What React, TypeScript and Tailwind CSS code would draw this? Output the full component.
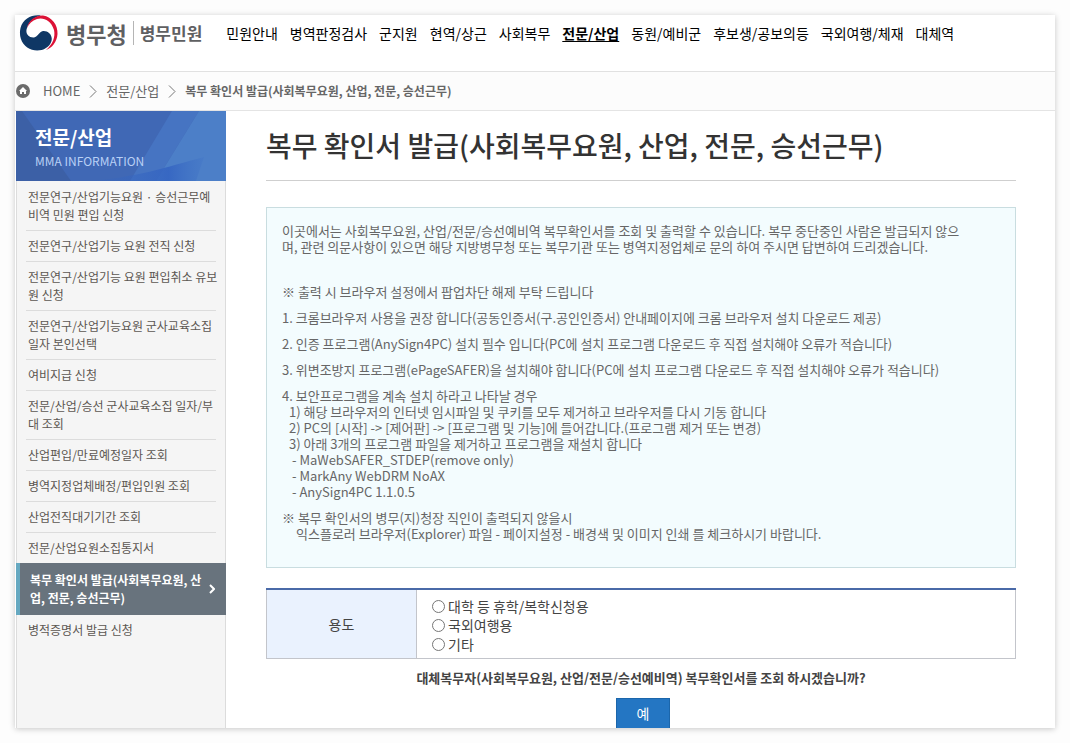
import React from 'react';

interface SideItem {
  lines: string[];
  active?: boolean;
}

const NAV = [
  '민원안내', '병역판정검사', '군지원', '현역/상근', '사회복무', '전문/산업',
  '동원/예비군', '후보생/공보의등', '국외여행/체재', '대체역',
];

const SIDE_ITEMS: SideItem[] = [
  { lines: ['전문연구/산업기능요원 · 승선근무예', '비역 민원 편입 신청'] },
  { lines: ['전문연구/산업기능 요원 전직 신청'] },
  { lines: ['전문연구/산업기능 요원 편입취소 유보', '원 신청'] },
  { lines: ['전문연구/산업기능요원 군사교육소집', '일자 본인선택'] },
  { lines: ['여비지급 신청'] },
  { lines: ['전문/산업/승선 군사교육소집 일자/부', '대 조회'] },
  { lines: ['산업편입/만료예정일자 조회'] },
  { lines: ['병역지정업체배정/편입인원 조회'] },
  { lines: ['산업전직대기기간 조회'] },
  { lines: ['전문/산업요원소집통지서'] },
  { lines: ['복무 확인서 발급(사회복무요원, 산', '업, 전문, 승선근무)'], active: true },
  { lines: ['병적증명서 발급 신청'] },
];

const PURPOSES = ['대학 등 휴학/복학신청용', '국외여행용', '기타'];

const Logo: React.FC = () => (
  <a href="#" className="flex shrink-0 items-center font-bold text-[#5f6062]">
    <svg width="40" height="36" viewBox="0 0 40 36" aria-hidden="true">
      <path d="M22 .6C14-1 4 3 1.5 13C-1 24 5 32 13 34.8C21 37 30 34 32.5 26C34 20 29 15.5 24 16C20 16.5 19 22 15 22.5C9 23 6 18 8 13C10 6 16 2 22 .6Z" fill="#0f3765" />
      <path d="M8 13C10 4 18 0 24 .5C33 2 39 10 38.5 19C38 27 33 33 27 35C34 29 36.5 22 35 15C32 5 24 2 18 4C13 5.5 10 9 8 13Z" fill="#dc1236" />
    </svg>
    <span className="ml-[7px] text-[22px] leading-9">병무청</span>
    <span className="mx-1.5 h-6 w-px bg-[#b5b5b5]" />
    <span className="text-[17px] leading-9">병무민원</span>
  </a>
);

const Header: React.FC = () => (
  <header className="flex h-[57px] items-start border-b border-[#e1e1e1] bg-white pl-1">
    <Logo />
    <nav className="ml-6 flex gap-3 whitespace-nowrap text-[14px] leading-9 text-black">
      {NAV.map((label) => (
        <a key={label} href="#" className={label === '전문/산업' ? 'font-bold underline underline-offset-2' : ''}>
          {label}
        </a>
      ))}
    </nav>
  </header>
);

const Crumb: React.FC = () => (
  <svg width="8" height="13" viewBox="0 0 8 13" fill="none" stroke="#777" aria-hidden="true">
    <path d="M1 .5l6 6-6 6" />
  </svg>
);

const Breadcrumb: React.FC = () => (
  <nav className="flex h-[39px] items-center border-b border-[#e4e4e4] bg-[#fcfcfc] pl-px text-[13px] text-[#666]">
    <svg width="14" height="14" viewBox="0 0 14 14" aria-hidden="true">
      <circle cx="7" cy="7" r="7" fill="#6b6b6b" />
      <path d="M7 3L3 7h1v3h2V8h2v2h2V7h1z" fill="#fff" />
    </svg>
    <div className="ml-[13px] flex items-center gap-[9px] whitespace-nowrap">
      <a href="#">HOME</a>
      <Crumb />
      <a href="#">전문/산업</a>
      <Crumb />
      <strong className="text-[12px] font-bold">복무 확인서 발급(사회복무요원, 산업, 전문, 승선근무)</strong>
    </div>
  </nav>
);

const Sidebar: React.FC = () => (
  <aside className="ml-px w-[210px] shrink-0 border-x border-[#dcdcdc] bg-[#f5f5f5]">
    <div className="relative -mx-px h-[70px] overflow-hidden bg-[#4068b5]">
      <svg className="absolute inset-0 h-full w-full" viewBox="0 0 210 70" preserveAspectRatio="none" aria-hidden="true">
        <defs>
          <linearGradient id="swoosh" x1="0" x2="1">
            <stop offset="0" stopColor="#3565be" stopOpacity="0" />
            <stop offset="0.7" stopColor="#3565c2" stopOpacity="0.9" />
            <stop offset="1" stopColor="#3f72c6" stopOpacity="0.3" />
          </linearGradient>
        </defs>
        <path d="M0 0h6l49 70H0z" fill="#3c60a6" />
        <path d="M156 0h27l-43 70h-26z" fill="#4674c2" />
        <path d="M183 0h27v70h-70z" fill="#4c7fc8" />
        <path d="M70 70c50-3 80-14 118-24l-8 24z" fill="url(#swoosh)" />
      </svg>
      <div className="relative pt-3 pl-[19px]">
        <h2 className="text-[19px] leading-7 font-bold text-white">전문/산업</h2>
        <p className="text-[12px] leading-5 text-[#b9d0f5]">MMA INFORMATION</p>
      </div>
    </div>
    <ul className="pt-px text-[12px] leading-[18px] whitespace-nowrap text-[#5c5752]">
      {SIDE_ITEMS.map((item, i) => (
        <li key={item.lines[0]} className={item.active ? '-mx-px' : 'ml-[9px]'}>
          <a
            href="#"
            className={
              item.active
                ? 'flex items-center justify-between border-l-4 border-[#66a9c1] bg-[#68737d] py-2 pr-[11px] pl-2.5 font-bold text-white'
                : `mr-[9px] block py-1.5 pl-0.5 ${i < 9 ? 'border-b border-[#dcdcdc]' : ''}`
            }
          >
            <span>
              {item.lines.map((line) => (
                <span key={line} className="block">{line}</span>
              ))}
            </span>
            {item.active && (
              <svg width="6" height="10" viewBox="0 0 6 10" fill="none" stroke="#fff" strokeWidth="2" aria-hidden="true">
                <path d="M1 1l4 4-4 4" />
              </svg>
            )}
          </a>
        </li>
      ))}
    </ul>
  </aside>
);

const Notice: React.FC = () => (
  <section className="mt-[26px] border border-[#c9dde0] bg-[#f3fcfe] px-[15px] pt-[15px] pb-[25px] text-[13px] leading-4 whitespace-nowrap text-[#666]">
    <p>
      이곳에서는 사회복무요원, 산업/전문/승선예비역 복무확인서를 조회 및 출력할 수 있습니다. 복무 중단중인 사람은 발급되지 않으
      <br />
      며, 관련 의문사항이 있으면 해당 지방병무청 또는 복무기관 또는 병역지정업체로 문의 하여 주시면 답변하여 드리겠습니다.
    </p>
    <div className="mt-[29px] space-y-2.5">
      <p>※ 출력 시 브라우저 설정에서 팝업차단 해제 부탁 드립니다</p>
      <p>1. 크롬브라우저 사용을 권장 합니다(공동인증서(구.공인인증서) 안내페이지에 크롬 브라우저 설치 다운로드 제공)</p>
      <p>2. 인증 프로그램(AnySign4PC) 설치 필수 입니다(PC에 설치 프로그램 다운로드 후 직접 설치해야 오류가 적습니다)</p>
      <p>3. 위변조방지 프로그램(ePageSAFER)을 설치해야 합니다(PC에 설치 프로그램 다운로드 후 직접 설치해야 오류가 적습니다)</p>
      <div>
        <p>4. 보안프로그램을 계속 설치 하라고 나타날 경우</p>
        <ul className="pl-[7px]">
          <li>1) 해당 브라우저의 인터넷 임시파일 및 쿠키를 모두 제거하고 브라우저를 다시 기동 합니다</li>
          <li>2) PC의 [시작] -&gt; [제어판] -&gt; [프로그램 및 기능]에 들어갑니다.(프로그램 제거 또는 변경)</li>
          <li>3) 아래 3개의 프로그램 파일을 제거하고 프로그램을 재설치 합니다</li>
        </ul>
        <ul className="pl-2.5">
          <li>- MaWebSAFER_STDEP(remove only)</li>
          <li>- MarkAny WebDRM NoAX</li>
          <li>- AnySign4PC 1.1.0.5</li>
        </ul>
      </div>
      <div>
        <p>※ 복무 확인서의 병무(지)청장 직인이 출력되지 않을시</p>
        <p className="pl-3.5">익스플로러 브라우저(Explorer) 파일 - 페이지설정 - 배경색 및 이미지 인쇄 를 체크하시기 바랍니다.</p>
      </div>
    </div>
  </section>
);

const PurposeForm: React.FC = () => (
  <form>
    <table className="mt-5 w-full border-collapse border border-t-2 border-[#c3c5cb] border-t-[#4a6aa8] text-[14px] leading-[19px] text-[#444]">
      <tbody>
        <tr>
          <th scope="row" className="w-[150px] border-r border-[#c3c5cb] bg-[#eaf2fe] font-normal">용도</th>
          <td className="pt-[7px] pb-1 pl-[15px]">
            {PURPOSES.map((purpose) => (
              <label key={purpose} className="flex items-center gap-[3px]">
                <input type="radio" name="purpose" value={purpose} className="m-0 size-[13px]" />
                {purpose}
              </label>
            ))}
          </td>
        </tr>
      </tbody>
    </table>
    <p className="mt-[9px] text-center text-[13px] leading-5 font-bold text-[#444]">
      대체복무자(사회복무요원, 산업/전문/승선예비역) 복무확인서를 조회 하시겠습니까?
    </p>
    <div className="mt-2.5 flex justify-center pl-1">
      <button type="button" className="h-[30px] w-[54px] border border-b-0 border-[#1b66ab] bg-[#2476c3] text-[14px] text-white">
        예
      </button>
    </div>
  </form>
);

const App: React.FC = () => (
  <div className="bg-[#fdfdfd] p-[15px] font-['Noto_Sans_CJK_KR',sans-serif]">
    <div className="bg-white shadow-[0_1px_6px_rgba(0,0,0,0.22)]">
      <Header />
      <Breadcrumb />
      <div className="flex">
        <Sidebar />
        <main className="min-w-0 flex-1 pr-[39px] pl-10">
          <h1 className="h-[70px] border-b border-[#cfcfcf] text-[28px] leading-[68px] font-medium whitespace-nowrap text-[#333]">
            복무 확인서 발급(사회복무요원, 산업, 전문, 승선근무)
          </h1>
          <Notice />
          <PurposeForm />
        </main>
      </div>
    </div>
  </div>
);

export default App;
